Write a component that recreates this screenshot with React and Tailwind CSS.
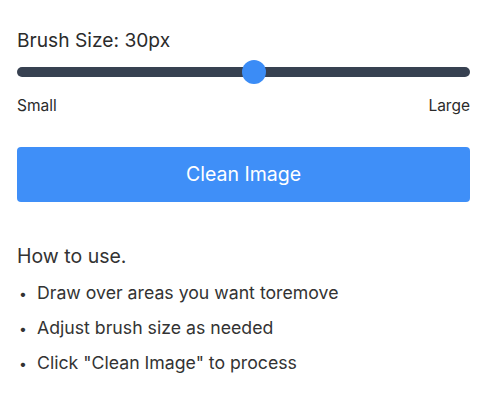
import { useState } from 'react';

const STEPS = [
  'Draw over areas you want toremove',
  'Adjust brush size as needed',
  'Click "Clean Image" to process',
];

export default function App() {
  const [size] = useState(30);
  const pct = 0.524;

  return (
    <div className="min-h-screen bg-white px-[17px] pt-[26px] text-[#333333]" style={{ fontFamily: 'Inter, "Noto Sans", sans-serif' }}>
      <div className="text-[19.2px] leading-[28px] text-[#2b2b2b]">Brush Size: {size}px</div>

      <div className="relative mt-[6px] h-[24px]">
        <div className="absolute left-0 right-0 top-[7px] h-[10px] rounded-full bg-[#374151]" />
        <div
          className="absolute top-0 h-[24px] w-[24px] -translate-x-1/2 rounded-full bg-[#3b8cf6]"
          style={{ left: `calc(12px + (100% - 24px) * ${pct})` }}
        />
      </div>

      <div className="mt-[12px] flex justify-between text-[15.5px] leading-[20px] text-[#2b2b2b]">
        <span>Small</span>
        <span>Large</span>
      </div>

      <button className="mt-[31px] flex h-[55px] w-full items-center justify-center rounded-[4px] bg-[#3f8ff8] text-[19.5px] text-white">
        Clean Image
      </button>

      <div className="mt-[40px] text-[19.5px] leading-[28px] text-[#333333]">How to use.</div>
      <ul className="mt-[6px] flex flex-col">
        {STEPS.map((s) => (
          <li key={s} className="flex h-[35px] items-center text-[17.7px] text-[#333333]">
            <span className="w-[20px] pl-[2px] text-[14px]">•</span>
            <span>{s}</span>
          </li>
        ))}
      </ul>
    </div>
  );
}
